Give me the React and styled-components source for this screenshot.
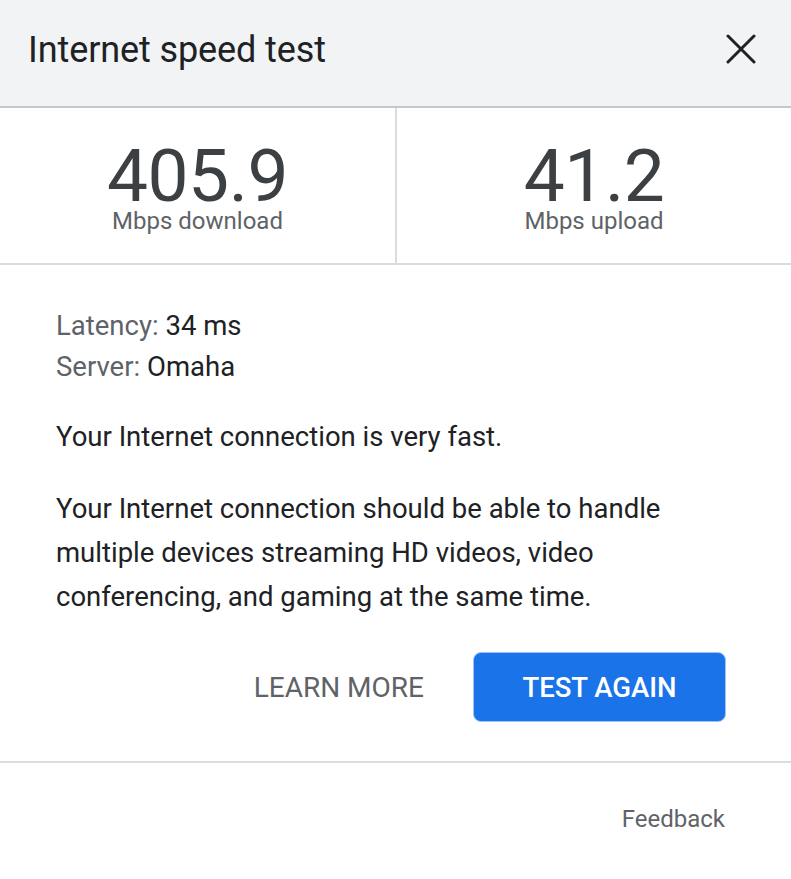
import styled, { createGlobalStyle } from 'styled-components'

const GlobalStyle = createGlobalStyle`
  html, body {
    margin: 0;
    padding: 0;
    background: #ffffff;
    font-family: Roboto, 'Liberation Sans', Arial, sans-serif;
  }
`

const Card = styled.div`
  width: 791px;
  height: 879px;
  background: #fff;
  display: flex;
  flex-direction: column;
`

const Header = styled.div`
  height: 108px;
  flex-shrink: 0;
  background: #f1f3f4;
  border-bottom: 2px solid #c4c6c8;
  display: flex;
  align-items: center;
  justify-content: space-between;
  padding: 0 34px 0 28px;
  box-sizing: border-box;
`

const Title = styled.h1`
  margin: 0 0 6px;
  font-size: 36px;
  font-weight: 400;
  color: #202124;
  letter-spacing: -0.1px;
`

const CloseButton = styled.button`
  border: none;
  background: transparent;
  padding: 0;
  width: 32px;
  height: 32px;
  display: flex;
  align-items: center;
  justify-content: center;
  cursor: pointer;
  margin-bottom: 8px;
`

const Results = styled.div`
  display: grid;
  grid-template-columns: 395px 1fr;
  height: 157px;
  flex-shrink: 0;
  box-sizing: border-box;
  border-bottom: 2px solid #dadce0;
`

const Result = styled.div`
  display: flex;
  flex-direction: column;
  align-items: center;
  padding-top: 38px;
  border-left: ${p => (p.divided ? '2px solid #dadce0' : 'none')};
`

const Value = styled.div`
  font-size: 73px;
  line-height: 60px;
  color: #3c4043;
  letter-spacing: -0.5px;
`

const Unit = styled.div`
  font-size: 24px;
  line-height: 28px;
  color: #5f6368;
  margin-top: 1px;
`

const Body = styled.div`
  padding: 40px 56px 0;
  height: 498px;
  flex-shrink: 0;
  box-sizing: border-box;
  border-bottom: 2px solid #dadce0;
  display: flex;
  flex-direction: column;
`

const InfoRow = styled.div`
  font-size: 27.5px;
  line-height: 41px;
  color: #202124;
`

const Label = styled.span`
  color: #5f6368;
`

const Text = styled.p`
  margin: 28px 0 0;
  font-size: 27.5px;
  line-height: 44px;
  color: #202124;
`

const Actions = styled.div`
  display: flex;
  justify-content: flex-end;
  align-items: center;
  gap: 49px;
  margin-top: 33px;
  margin-right: 9px;
`

const TextButton = styled.button`
  border: none;
  background: transparent;
  font-family: inherit;
  font-size: 28px;
  color: #5f6368;
  padding: 0;
  cursor: pointer;
`

const PrimaryButton = styled.button`
  width: 253px;
  height: 70px;
  border: 1px solid #9ec2f5;
  border-radius: 8px;
  background: #1a73e8;
  color: #fff;
  font-family: inherit;
  font-size: 27.5px;
  font-weight: 500;
  cursor: pointer;
`

const Footer = styled.div`
  display: flex;
  justify-content: flex-end;
  padding: 42px 66px 0 0;
`

const FeedbackLink = styled.a`
  font-size: 24px;
  line-height: 28px;
  color: #5f6368;
  text-decoration: none;
  cursor: pointer;
`

export default function App() {
  return (
    <>
      <GlobalStyle />
      <Card>
        <Header>
          <Title>Internet speed test</Title>
          <CloseButton aria-label="Close">
            <svg width="30" height="30" viewBox="0 0 30 30">
              <path d="M2 2 L28 28 M28 2 L2 28" stroke="#202124" strokeWidth="3" strokeLinecap="round" />
            </svg>
          </CloseButton>
        </Header>
        <Results>
          <Result>
            <Value>405.9</Value>
            <Unit>Mbps download</Unit>
          </Result>
          <Result divided>
            <Value>41.2</Value>
            <Unit>Mbps upload</Unit>
          </Result>
        </Results>
        <Body>
          <InfoRow><Label>Latency:</Label> 34 ms</InfoRow>
          <InfoRow><Label>Server:</Label> Omaha</InfoRow>
          <Text>Your Internet connection is very fast.</Text>
          <Text>
            Your Internet connection should be able to handle multiple devices streaming HD videos, video
            conferencing, and gaming at the same time.
          </Text>
          <Actions>
            <TextButton>LEARN MORE</TextButton>
            <PrimaryButton>TEST AGAIN</PrimaryButton>
          </Actions>
        </Body>
        <Footer>
          <FeedbackLink>Feedback</FeedbackLink>
        </Footer>
      </Card>
    </>
  )
}
